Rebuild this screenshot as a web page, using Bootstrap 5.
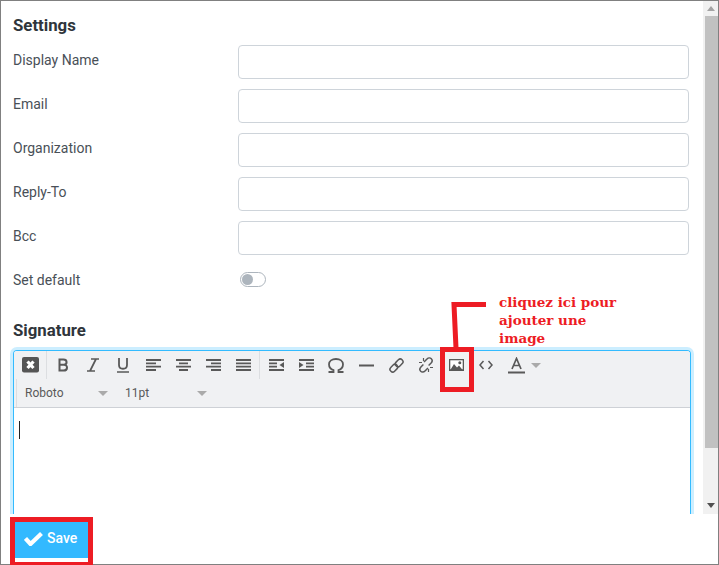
<!DOCTYPE html>
<html lang="fr">
<head>
<meta charset="utf-8">
<title>Settings</title>
<link rel="stylesheet" href="https://cdn.jsdelivr.net/npm/bootstrap@5.3.0/dist/css/bootstrap.min.css">
<style>
html,body{height:100%;margin:0;overflow:hidden;background:#fff}
body{font-family:Roboto,sans-serif;font-size:14px;color:#343a40}
.frame{width:719px;height:565px;border:1px solid #808080;position:relative;background:#fff}
.scrollarea{height:513px;overflow:hidden}
.pane{width:702px;padding:15px 12px 0 12px;overflow:hidden;height:513px}
.head-t{font-size:16.8px;font-weight:700;line-height:19px;color:#2f353b;margin:0}
.set-row{height:44px}
.set-label{width:225px;color:#495057;font-size:14px;line-height:17px;padding-top:7px}
.set-input{width:451px;height:34px;border:1px solid #ced4da;border-radius:4px;background:#fff}
.first-row{margin-top:10px}
.switch{width:26px;height:15px;border:1px solid #adb5bd;border-radius:8px;margin-left:2px;margin-top:3px;padding:1px}
.knob{width:11px;height:11px;background:#adb5bd;border-radius:50%}
.sig-h{margin-top:12px}
.editor{margin-top:10px;width:678px;height:170px;border:1px solid #33bbff;border-bottom:0;border-radius:4px 4px 0 0;box-shadow:0 0 0 3px #cceeff;overflow:hidden}
.bar{background:#f0f1f3;height:57px;border-bottom:1px solid #ced1d6}
.tb1{height:28px;padding-left:1px}
.tb2{height:28px;margin-left:2px;border-left:1px solid #dcdee1}
.tool{width:30px;height:28px;flex:none;color:#595959}
.tool svg{display:block}
.sep{width:1px;height:28px;background:#dcdee1;flex:none;margin:0 1px}
.sel{font-size:12px;color:#595959;line-height:14px;flex:none;position:relative;padding-left:8px}
.sel1{width:99px}
.sel2{width:100px;padding-left:9px}
.caret{width:0;height:0;border-left:5px solid transparent;border-right:5px solid transparent;border-top:5px solid #aaa;flex:none}
.sel1 .caret,.sel2 .caret{position:absolute;top:5px;left:81px}
.edit-body{padding:13px 5px}
.cursor{width:1px;height:18px;background:#222}
.vbar{position:absolute;left:702px;top:0;width:15px;height:513px;background:#f1f1f1}
.vup,.vdn{position:absolute;left:4px;width:0;height:0;border-left:4px solid transparent;border-right:4px solid transparent}
.vup{top:5px;border-bottom:5px solid #a3a3a3}
.vdn{top:502px;border-top:5px solid #505050}
.thumb{position:absolute;left:2px;right:0;top:15px;height:432px;background:#c1c1c1}
.foot{height:50px;padding:3px 9px 0}
.save{width:83px;height:48px;border:5px solid #ed1c24;border-bottom-width:3px;background:#fff}
.save-in{background:#33b9ff;height:36px;color:#fff;font-size:14px;font-weight:500;gap:4px;padding:0 0 4px 9px}
.note{position:absolute;left:498px;top:292px;width:150px;font-family:"DejaVu Serif","Liberation Serif",serif;font-weight:700;font-size:13.5px;line-height:18px;color:#ed1c24}
.mark-box{position:absolute;left:439px;top:346px;width:34px;height:45px;border:5px solid #ed1c24}
.leader{position:absolute;left:449px;top:300px}
</style>
</head>
<body>
<div class="frame">
  <div class="scrollarea">
    <div class="pane">
      <h6 class="head-t">Settings</h6>
      <div class="d-flex set-row first-row"><div class="set-label">Display Name</div><div class="set-input"></div></div>
      <div class="d-flex set-row"><div class="set-label">Email</div><div class="set-input"></div></div>
      <div class="d-flex set-row"><div class="set-label">Organization</div><div class="set-input"></div></div>
      <div class="d-flex set-row"><div class="set-label">Reply-To</div><div class="set-input"></div></div>
      <div class="d-flex set-row"><div class="set-label">Bcc</div><div class="set-input"></div></div>
      <div class="d-flex set-row"><div class="set-label">Set default</div><div class="pt-1"><div class="switch"><div class="knob"></div></div></div></div>
      <h6 class="head-t sig-h">Signature</h6>
      <div class="editor">
        <div class="bar">
          <div class="d-flex tb1 align-items-center">
            <div class="tool d-flex align-items-center justify-content-center"><svg width="17" height="16" viewBox="0 0 17 16"><rect width="17" height="15.500" rx="2" fill="#555"/><path d="M5.500 4.500l6 6.500M11.500 4.500l-6 6.500" stroke="#fff" stroke-width="3.200"/></svg></div>
            <div class="sep"></div>
            <div class="tool d-flex align-items-center justify-content-center"><svg width="12" height="14" viewBox="0 0 12 14"><path d="M2.500 1.500h4c4 0 4 5 .5 5.200 4 0 4.200 5.800-.5 5.800h-4zM2.500 6.800h4.500" fill="none" stroke="#595959" stroke-width="2"/></svg></div>
            <div class="tool d-flex align-items-center justify-content-center"><svg width="14" height="14" viewBox="0 0 14 14"><path d="M5 1h8M1 13h8M10 1L4 13" fill="none" stroke="#595959" stroke-width="1.700"/></svg></div>
            <div class="tool d-flex align-items-center justify-content-center"><svg width="14" height="16" viewBox="0 0 14 16"><path d="M3 1v7c0 5 8 5 8 0V1" fill="none" stroke="#595959" stroke-width="1.800"/><path d="M1 15h12" stroke="#595959" stroke-width="1.600"/></svg></div>
            <div class="tool d-flex align-items-center justify-content-center"><svg width="15" height="12" viewBox="0 0 15 12"><path d="M0 1h15M0 4.300h10M0 7.700h15M0 11h10" stroke="#595959" stroke-width="1.800"/></svg></div>
            <div class="tool d-flex align-items-center justify-content-center"><svg width="15" height="12" viewBox="0 0 15 12"><path d="M0 1h15M3 4.300h9M0 7.700h15M3 11h9" stroke="#595959" stroke-width="1.800"/></svg></div>
            <div class="tool d-flex align-items-center justify-content-center"><svg width="15" height="12" viewBox="0 0 15 12"><path d="M0 1h15M5 4.300h10M0 7.700h15M5 11h10" stroke="#595959" stroke-width="1.800"/></svg></div>
            <div class="tool d-flex align-items-center justify-content-center"><svg width="15" height="12" viewBox="0 0 15 12"><path d="M0 1h15M0 4.300h15M0 7.700h15M0 11h15" stroke="#595959" stroke-width="1.800"/></svg></div>
            <div class="sep"></div>
            <div class="tool d-flex align-items-center justify-content-center"><svg width="15" height="12" viewBox="0 0 15 12"><path d="M0 1h15M0 4.300h8M0 7.700h8M0 11h15" stroke="#595959" stroke-width="1.800"/><path d="M15 3v6l-4.500-3z" fill="#595959"/></svg></div>
            <div class="tool d-flex align-items-center justify-content-center"><svg width="15" height="12" viewBox="0 0 15 12"><path d="M0 1h15M7 4.300h8M7 7.700h8M0 11h15" stroke="#595959" stroke-width="1.800"/><path d="M0 3v6l4.500-3z" fill="#595959"/></svg></div>
            <div class="tool d-flex align-items-center justify-content-center"><svg width="16" height="15" viewBox="0 0 16 15"><path d="M.500 14h5v-1.800C2 11 1 8.500 1 6.300 1 3 4 1 8 1s7 2 7 5.300c0 2.200-1 4.700-4.500 5.900V14h5" fill="none" stroke="#595959" stroke-width="1.800"/></svg></div>
            <div class="tool d-flex align-items-center justify-content-center"><svg width="15" height="3" viewBox="0 0 15 3"><rect width="15" height="2" y=".5" fill="#595959"/></svg></div>
            <div class="tool d-flex align-items-center justify-content-center"><svg width="15" height="15" viewBox="0 0 15 15"><g fill="none" stroke="#595959" stroke-width="1.500" transform="rotate(-45 7.500 7.500)"><rect x="-.5" y="4.800" width="8.500" height="5.400" rx="2.600"/><rect x="7" y="4.800" width="8.500" height="5.400" rx="2.600"/></g></svg></div>
            <div class="tool d-flex align-items-center justify-content-center"><svg width="16" height="16" viewBox="0 0 16 16"><g fill="none" stroke="#595959" stroke-width="1.500"><path d="M6 5l3-3c1.500-1.500 3.500-1 4.300-.2s1.200 2.700-.2 4.200l-2.500 2.500"/><path d="M10 11l-3 3c-1.500 1.500-3.500 1-4.300.2s-1.200-2.700.2-4.200L5.400 7.500"/><path d="M1 5.500h3M5.500 1v3M15 10.500h-3M10.500 15v-3" stroke-width="1.200"/></g></svg></div>
            <div class="tool d-flex align-items-center justify-content-center"><svg width="15" height="12" viewBox="0 0 15 12"><rect width="15" height="12" fill="#595959"/><rect x="1.300" y="1.300" width="12.400" height="9" fill="#fff"/><path d="M1 11.500l4-6.500 3 3.500 2-2 4 5z" fill="#595959"/><circle cx="10.800" cy="3.800" r="1.500" fill="#595959"/></svg></div>
            <div class="tool d-flex align-items-center justify-content-center"><svg width="14" height="10" viewBox="0 0 14 10"><path d="M4.500 1L1 5l3.500 4M9.500 1L13 5l-3.500 4" fill="none" stroke="#595959" stroke-width="1.500"/></svg></div>
            <div class="tool d-flex align-items-center justify-content-center"><svg width="17" height="17" viewBox="0 0 17 17"><path d="M4 12L8.500 1.500 13 12M5.500 8.500h6" fill="none" stroke="#595959" stroke-width="1.700"/><rect y="14.500" width="17" height="2" fill="#595959"/></svg></div>
            <div class="caret"></div>
          </div>
          <div class="d-flex tb2 align-items-center">
            <div class="sel sel1">Roboto<span class="caret d-block"></span></div>
            <div class="sel sel2">11pt<span class="caret d-block"></span></div>
          </div>
        </div>
        <div class="edit-body"><div class="cursor"></div></div>
      </div>
    </div>
    <div class="vbar"><div class="vup"></div><div class="thumb"></div><div class="vdn"></div></div>
  </div>
  <div class="foot">
    <div class="save"><div class="save-in d-flex align-items-center"><svg width="19" height="15" viewBox="0 0 19 15"><path d="M1.500 7.500l5 5.500L17.500 2.500" fill="none" stroke="#fff" stroke-width="4.200"/></svg><span>Save</span></div></div>
  </div>
  <div class="note">cliquez ici pour<br>ajouter une<br>image</div>
  <svg class="leader" width="50" height="50" viewBox="0 0 50 50"><path d="M36 3.500H4L6 47" fill="none" stroke="#ed1c24" stroke-width="5"/></svg>
  <div class="mark-box"></div>
</div>
</body>
</html>
